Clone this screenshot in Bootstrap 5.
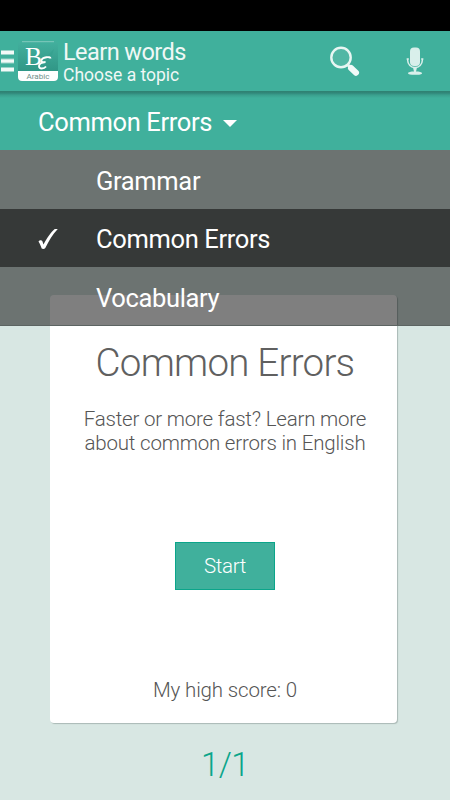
<!DOCTYPE html>
<html lang="en">
<head>
  <meta charset="UTF-8" />
  <meta name="viewport" content="width=device-width, initial-scale=1" />
  <title>Learn words</title>
  <link
    href="https://cdn.jsdelivr.net/npm/bootstrap@5.3.0/dist/css/bootstrap.min.css"
    rel="stylesheet"
  />
  <style>
    body { background: #d8e7e3; font-family: Roboto, sans-serif; height: 800px; overflow: hidden; }
    .status-bar { height: 31px; background: #000; }
    .app-bar { height: 60px; background: #40b09c; color: #f0f8f6; }
    .app-logo { width: 40px; height: 40px; margin-left: 2px; }
    .app-title { font-size: 23.5px; line-height: 26px; letter-spacing: -.55px; margin: 3px 0 0 5px; }
    .app-title small { display: block; font-size: 17.5px; line-height: 21px; letter-spacing: 0; }
    .search-icon { margin-right: 44px; }
    .mic-icon { margin-right: 25px; }
    .topic-bar {
      height: 59px; padding: 3px 0 0 38px; color: #fff; font-size: 25.5px; letter-spacing: -.35px;
      background: linear-gradient(#2f8071 0, #31877a 2px, #3a9f8d 4px, #40b09c 7px);
    }
    .topic-caret { border: 7px solid transparent; border-top-color: #fff; border-bottom: 0; margin: 2px 0 0 11px; }
    .topic-menu { z-index: 2; background: rgba(0, 0, 0, .5); box-shadow: inset 0 -1px #5c6462; }
    .topic-item { height: 58.6px; padding: 3px 0 0 96px; color: #fff; font-size: 25.5px; letter-spacing: -.35px; }
    .topic-item.chosen { background: rgba(0, 0, 0, .5); padding-left: 37px; }
    .topic-check { width: 22px; height: 22px; margin-right: 37px; }
    .topic-card { width: 347px; height: 428px; margin: 145px 0 0 50px; padding-left: 3px; border-radius: 4px; box-shadow: 1px 1px 1px #aab9b5; color: #555; font-weight: 300; }
    .card-heading { font-size: 38.5px; line-height: 46px; letter-spacing: -.75px; margin-top: 45px; color: #606060; }
    .card-copy { font-size: 20.5px; line-height: 24px; letter-spacing: -.2px; margin-top: 21px; }
    .start-btn { width: 100px; height: 48px; margin-top: 87px; border: 1px solid #0ba58a; background: #40b09c; color: #fff; font-size: 20.5px; letter-spacing: -.3px; font-weight: 300; }
    .high-score { font-size: 20.5px; line-height: 24px; letter-spacing: -.15px; margin-top: 88px; }
    .page-count { color: #0ba58a; font-size: 33px; font-weight: 300; line-height: 40px; letter-spacing: -.5px; margin-top: 22px; }
  </style>
</head>
<body>
  <div class="status-bar"></div>

  <header class="app-bar d-flex align-items-center">
    <svg width="16" height="28" viewBox="0 0 16 28">
      <path d="M1 5.500h13M1 14h13M1 22.500h13" stroke="#9bd4c9" stroke-width="5" />
      <path d="M1 5.500h13M1 14h13M1 22.500h13" stroke="#f2faf8" stroke-width="3" />
    </svg>
    <svg class="app-logo" viewBox="0 0 40 40">
      <defs>
        <linearGradient id="logoFill" x1="0" y1="0" x2="0" y2="1">
          <stop offset="0" stop-color="#43b09e" />
          <stop offset="1" stop-color="#2a8e7e" />
        </linearGradient>
      </defs>
      <rect width="40" height="40" rx="4" fill="url(#logoFill)" />
      <path d="M4 .7h32" stroke="#82cabd" />
      <path d="M20 24c5-3 9-9 16-16-2 7-5 12-12 18" fill="#35a08e" opacity=".7" />
      <path d="M0 30h40v6a4 4 0 0 1-4 4H4a4 4 0 0 1-4-4z" fill="#fff" />
      <text x="7" y="24" font-family="Liberation Serif, serif" font-size="26" textLength="17" lengthAdjust="spacingAndGlyphs" fill="#fff">B</text>
      <path d="M32.500 17.500c0-2.500-8-1.500-9 1.500-.6 2 1 2.500 4 2-4 .5-6.500 2-6.500 4 0 3.500 5 3 7 .500" fill="none" stroke="#fff" stroke-width="1.900" />
      <text x="20" y="37.500" font-family="Roboto, sans-serif" font-size="8" text-anchor="middle" textLength="23" lengthAdjust="spacingAndGlyphs" fill="#6e908a">Arabic</text>
    </svg>
    <div class="app-title">Learn words<small>Choose a topic</small></div>
    <svg class="search-icon ms-auto" width="32" height="32" viewBox="0 0 32 32">
      <circle cx="12" cy="12.500" r="9.700" fill="#52b7a5" stroke="#e8f6f3" stroke-width="2.400" />
      <path d="M18.500 19.500l3 3" stroke="#e8f6f3" stroke-width="3" />
      <path d="M22 23l5 4.700" stroke="#f0faf8" stroke-width="6" stroke-linecap="round" />
    </svg>
    <svg class="mic-icon" width="20" height="30" viewBox="0 0 20 30">
      <rect x="5" y="1.500" width="10" height="18.500" rx="4" fill="#d9efeb" />
      <path d="M2.700 12.500v2a7.300 7 0 0 0 14.600 0v-2" fill="none" stroke="#d9efeb" stroke-width="1.500" />
      <path d="M1.500 13h2.500M16 13h2.500" stroke="#d9efeb" stroke-width="1.200" />
      <path d="M8 21.500h4l-1 4c3 0 6 .5 6 1.700s-2.500 1.600-7 1.600-7-.5-7-1.600 3-1.700 6-1.700z" fill="#d9efeb" />
    </svg>
  </header>

  <main class="position-relative">
    <div class="topic-bar d-flex align-items-center">
      Common Errors<span class="topic-caret"></span>
    </div>

    <!-- Open topic menu, lies over the card -->
    <div class="topic-menu position-absolute w-100">
      <div class="topic-item d-flex align-items-center">Grammar</div>
      <div class="topic-item chosen d-flex align-items-center">
        <svg class="topic-check" viewBox="0 0 22 22">
          <path d="M1.500 13.500c1-1.400 3-1.700 3.800-.500l1.200 3.500C10 10 14 4 17.800 1h3C15.500 6.500 12 12.500 8.300 20c-.8 1.200-2.800 1.200-3.600.5C3.800 18.500 3 15.500 1.500 13.500z" fill="#fff" />
        </svg>
        Common Errors
      </div>
      <div class="topic-item d-flex align-items-center">Vocabulary</div>
    </div>

    <section class="topic-card bg-white d-flex flex-column align-items-center text-center">
      <div class="card-heading">Common Errors</div>
      <div class="card-copy">Faster or more fast? Learn more<br />about common errors in English</div>
      <button class="start-btn p-0" type="button">Start</button>
      <div class="high-score">My high score: 0</div>
    </section>
    <div class="page-count text-center">1/1</div>
  </main>

  <script src="https://cdn.jsdelivr.net/npm/bootstrap@5.3.0/dist/js/bootstrap.bundle.min.js"></script>
</body>
</html>
